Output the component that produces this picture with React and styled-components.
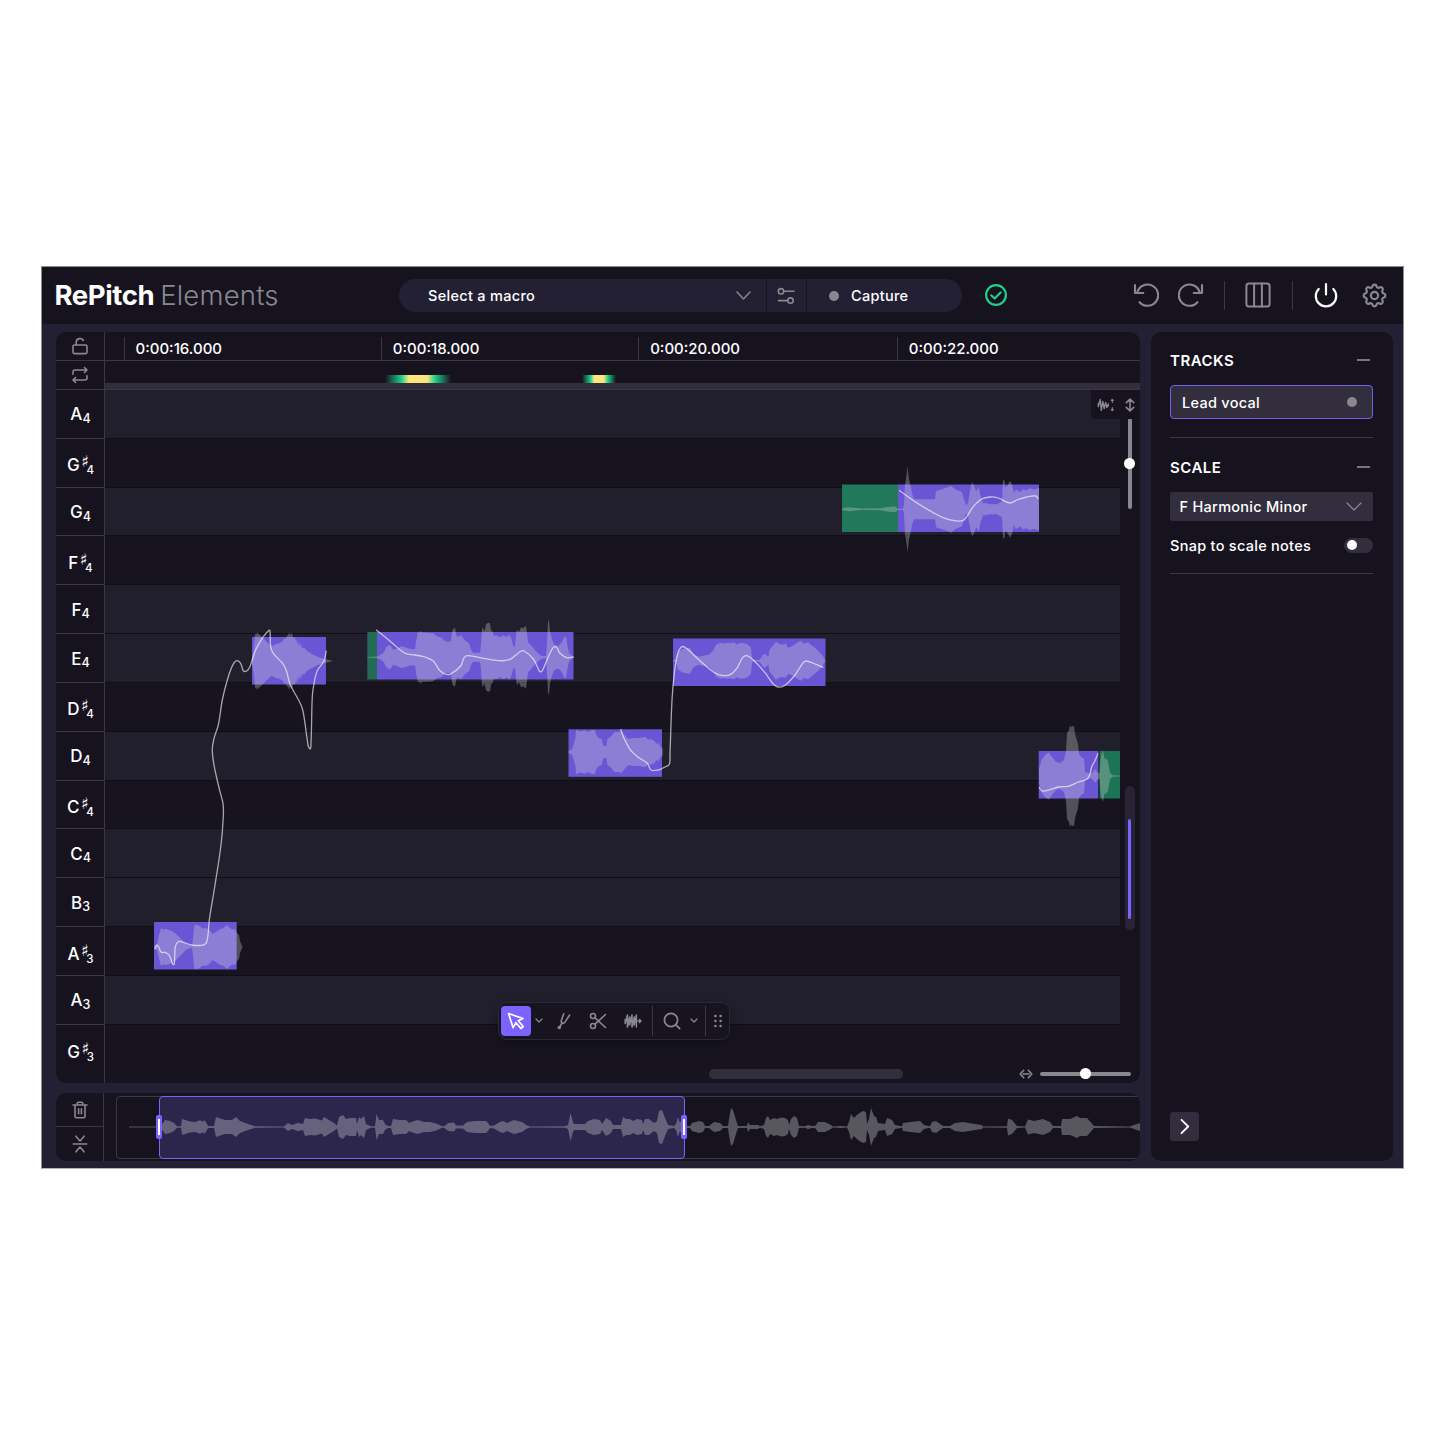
import React from 'react';
import styled, { createGlobalStyle } from 'styled-components';
import { TbSettings } from 'react-icons/tb';

const GlobalStyle = createGlobalStyle`
    * { box-sizing: border-box; }
    body {
        margin: 0;
        background: #fff;
        font-family: Inter, "Liberation Sans", sans-serif;
        -webkit-font-smoothing: antialiased;
    }
    svg { display: block; flex: none; }
`

const colors = {
    panel: '#16131f',
    frame: '#242033',
    raised: '#322e3e',
    line: '#3b3844',
    muted: '#8a888f',
    accent: '#7b63ff',
    green: '#1fd08b',
    note: '#6a56d4',
}

/* ---------- window ---------- */

const Page = styled.div`
    padding: 266px 0 0 41px;
    height: 1445px;
    overflow: hidden;
`

const Window = styled.div`
    width: 1363px;
    height: 903px;
    border: 1px solid #8f8d94;
    border-bottom-color: #b5b3b9;
    background: ${colors.frame};
    color: #fff;
    display: flex;
    flex-direction: column;
`

const TopBar = styled.header`
    height: 57px;
    padding-bottom: 1px;
    flex: none;
    background: ${colors.panel};
    display: flex;
    align-items: center;
`

const Logo = styled.div`
    width: 356.5px;
    padding-left: 12.5px;
    font-size: 27.5px;
    font-weight: 700;
    letter-spacing: -0.4px;
    white-space: nowrap;

    span {
        margin-left: 6px;
        font-weight: 300;
        letter-spacing: 0.2px;
        color: ${colors.muted};
    }
`

const MacroBar = styled.div`
    display: flex;
    gap: 1px;
    height: 33px;
    width: 563px;
    margin-top: 1px;
    border-radius: 17px;
    overflow: hidden;
    font-size: 14.5px;
    font-weight: 500;
    letter-spacing: 0.3px;
`

const MacroPart = styled.div`
    width: ${({ width }) => width}px;
    padding: ${({ pad }) => pad || '0'};
    display: flex;
    align-items: center;
    justify-content: ${({ justify }) => justify || 'flex-start'};
    gap: ${({ gap }) => gap || 0}px;
    background: ${colors.frame};
`

const Dot = styled.span`
    width: 10px;
    height: 10px;
    border-radius: 50%;
    background: ${colors.muted};
`

const Status = styled.div`
    margin-left: 22px;
`

const Actions = styled.div`
    margin-left: auto;
    padding-right: 14px;
    display: flex;
    align-items: center;
`

const Separator = styled.i`
    flex: none;
    width: 1px;
    height: ${({ height }) => height}px;
    margin: ${({ margin }) => margin || '0'};
    background: ${colors.line};
`

const Spacer = styled.i`
    flex: none;
    width: ${({ width }) => width}px;
`

const Workspace = styled.main`
    flex: 1;
    display: flex;
    gap: 11px;
    padding: 8px 10px 7px 14px;
`

const Column = styled.div`
    width: 1083.5px;
    display: flex;
    flex-direction: column;
    gap: 10px;
`

/* ---------- editor ---------- */

const Editor = styled.section`
    height: 751px;
    background: ${colors.panel};
    border-radius: 10px;
    overflow: hidden;
    display: flex;
`

const Keys = styled.div`
    width: 49px;
    flex: none;
    border-right: 1px solid ${colors.line};
`

const KeyTool = styled.div`
    height: ${({ height }) => height}px;
    border-bottom: 1px solid ${colors.line};
    display: flex;
    align-items: center;
    justify-content: center;
`

const Key = styled.div`
    height: 48.83px;
    border-bottom: 1px solid ${colors.line};
    display: flex;
    justify-content: center;
    align-items: center;
    font-size: 17px;
    font-weight: 500;
    padding: ${({ $sharp }) => ($sharp ? '5px 0 0 1px' : '1px 0 0 1px')};

    &:last-child { border-bottom: 0; }
`

const Sharp = styled.sup`
    margin: -7px 0 0 1.5px;
    font: bold 16px/15px "DejaVu Sans", sans-serif;
    vertical-align: baseline;
`

const Octave = styled.sub`
    margin: ${({ $sharp }) => ($sharp ? '10px 0 0 -2.5px' : '9px 0 0 0')};
    font-size: ${({ $sharp }) => ($sharp ? 11.5 : 12.5)}px;
    line-height: 12px;
    vertical-align: baseline;
`

const Stage = styled.div`
    flex: 1;
    min-width: 0;
    display: flex;
    flex-direction: column;
`

const Ruler = styled.div`
    height: 29px;
    flex: none;
    padding: 5px 0 0 18.5px;
    border-bottom: 1px solid ${colors.line};
    display: flex;
    overflow: hidden;
`

const Tick = styled.div`
    width: ${({ width }) => width}px;
    flex: none;
    border-left: 1px solid ${colors.line};
    padding-left: 11px;
    font-size: 15px;
    line-height: 23px;
    font-weight: 500;
`

const HeatRow = styled.div`
    height: 29px;
    flex: none;
    padding-top: 14px;
    border-bottom: 1px solid ${colors.line};
    display: flex;
    background: linear-gradient(${colors.panel} 22px, ${colors.raised} 22px);
`

const Heat = styled.i`
    height: 8px;
    width: ${({ width }) => width}px;
    margin-left: ${({ offset }) => offset}px;
    background: linear-gradient(90deg, #1fd08b00, #1fd08b 25%, #fbe67b 36%, #fbe67b 64%, #1fd08b 76%, #1fd08b00);
`

const Roll = styled.div`
    position: relative;
    flex: 1;
    display: flex;
    min-height: 0;
`

const Lanes = styled.div`
    width: 1015px;
    overflow: hidden;
`

const Lane = styled.div`
    height: 48.83px;
    background: ${({ $dark }) => ($dark ? '#171420' : '#221f2d')};
    border-bottom: 1.5px solid #0f0d15;

    &:last-child { height: 60px; border: 0; }
`

const NoteLayer = styled.svg`
    position: absolute;
    left: 0;
    top: 0;
`

const VerticalTools = styled.div`
    position: absolute;
    right: 0;
    top: 0;
    width: 48.5px;
    height: 29px;
    padding: 0 5px 0 5.5px;
    border-radius: 0 0 0 4px;
    background: ${colors.panel};
    display: flex;
    align-items: center;
    justify-content: space-between;
`

const VerticalRail = styled.div`
    width: 19px;
    padding-top: 28px;
    display: flex;
    flex-direction: column;
    align-items: center;
`

const Slider = styled.div`
    width: ${({ $vertical }) => ($vertical ? 4 : 91)}px;
    height: ${({ $vertical }) => ($vertical ? 91 : 4)}px;
    border-radius: 2px;
    background: ${colors.muted};
    display: flex;
    align-items: center;
    justify-content: center;

    &::after {
        content: '';
        flex: none;
        width: 10.5px;
        height: 10.5px;
        border-radius: 50%;
        background: #fff;
    }
`

const VerticalScroll = styled.div`
    width: 10px;
    height: 144px;
    margin-top: 277px;
    padding: 33px 3.5px 11px;
    border-radius: 5px;
    background: #282435;

    i {
        display: block;
        height: 100%;
        border-radius: 2px;
        background: ${colors.accent};
    }
`

const RollFooter = styled.div`
    position: absolute;
    left: 604px;
    right: 8.5px;
    bottom: 4px;
    height: 11px;
    display: flex;
    align-items: center;
`

const ScrollThumb = styled.div`
    width: 194px;
    height: 10px;
    margin-right: 116px;
    border-radius: 5px;
    background: ${colors.raised};
`

const Toolbar = styled.div`
    position: absolute;
    left: 392.5px;
    top: 611.5px;
    width: 232.5px;
    height: 38px;
    padding-left: 2.5px;
    border: 1px solid #2c2937;
    border-radius: 9px;
    background: #17141f;
    box-shadow: 0 4px 12px rgba(0, 0, 0, 0.3);
    display: flex;
    align-items: center;
`

const Tool = styled.div`
    flex: none;
    width: ${({ width }) => width}px;
    height: 30px;
    border-radius: 4px;
    background: ${({ $active }) => ($active ? colors.accent : 'none')};
    display: flex;
    align-items: center;
    justify-content: center;
`

/* ---------- overview ---------- */

const Overview = styled.section`
    height: 68px;
    border-radius: 10px;
    overflow: hidden;
    background: ${colors.panel};
    display: flex;
`

const OverviewTools = styled.div`
    width: 48px;
    flex: none;
    border-right: 1px solid ${colors.line};
`

const OverviewTrack = styled.div`
    position: relative;
    flex: none;
    width: 1040px;
    height: 63px;
    margin: 3px 0 0 12px;
    border: 1px solid ${colors.line};
    border-radius: 4px;
`

const OverviewWave = styled.svg`
    position: absolute;
    left: -1px;
    top: -1px;
`

const Selection = styled.div`
    position: absolute;
    left: 42px;
    top: -1px;
    width: 526px;
    height: 63px;
    border: 1.5px solid ${colors.accent};
    border-radius: 4px;
    background: #2c254c;
    display: flex;
    align-items: center;
    justify-content: space-between;
`

const Handle = styled.i`
    width: 6px;
    height: 24px;
    margin: -1px -3px 0 -4px;
    padding: 4px 2px;
    border-radius: 2px;
    background: ${colors.accent};
    z-index: 1;

    &::after {
        content: '';
        display: block;
        width: 1.5px;
        height: 16px;
        background: #fff;
    }
`

/* ---------- side panel ---------- */

const Side = styled.aside`
    width: 242.5px;
    padding: 16px 20px 20px 19.5px;
    border-radius: 10px;
    background: ${colors.panel};
    display: flex;
    flex-direction: column;
    font-size: 14.5px;
    font-weight: 500;
    letter-spacing: 0.28px;
`

const Group = styled.div`
    border-bottom: 1px solid ${colors.line};
    padding-bottom: ${({ bottom }) => bottom}px;
    margin-bottom: 17px;
`

const SideRow = styled.div`
    display: flex;
    align-items: center;
    justify-content: space-between;
    height: ${({ height }) => height}px;
    white-space: nowrap;
`

const SideTitle = styled(SideRow)`
    height: 24px;
    font-size: 15px;
    font-weight: 600;
    letter-spacing: 0.5px;

    &::after {
        content: '';
        width: 13px;
        height: 1.5px;
        margin-right: 3px;
        background: #77757d;
    }
`

const TrackItem = styled(SideRow)`
    height: 34px;
    margin-top: 13px;
    padding: 0 15.5px 0 11px;
    border: 1.5px solid #7460ee;
    border-radius: 4px;
    background: ${colors.raised};
`

const Select = styled(SideRow)`
    height: 29px;
    margin: 13px 0 10px;
    padding: 0 11px 0 9.5px;
    border-radius: 2px;
    background: ${colors.raised};
`

const Toggle = styled.i`
    width: 29px;
    height: 15px;
    padding: 2.5px;
    border-radius: 8px;
    background: ${colors.raised};

    &::after {
        content: '';
        display: block;
        width: 10px;
        height: 10px;
        border-radius: 50%;
        background: #fff;
    }
`

const ExpandButton = styled.div`
    width: 29px;
    height: 29px;
    margin-top: auto;
    border-radius: 3px;
    background: ${colors.raised};
    display: flex;
    align-items: center;
    justify-content: center;
`

/* ---------- icons ---------- */

const Icon = ({ w, h = w, color = colors.muted, sw = 1.6, children }) => (
    <svg width={w} height={h} viewBox={`0 0 ${w} ${h}`} fill="none" stroke={color}
        strokeWidth={sw} strokeLinecap="round" strokeLinejoin="round">
        {children}
    </svg>
)

const Chevron = ({ w = 14, h = 8, sw = 1.5 }) => (
    <Icon w={w} h={h} sw={sw}><path d={`M1 1 L${w / 2} ${h - 1} L${w - 1} 1`} /></Icon>
)

const UndoIcon = () => (
    <Icon w={26} sw={2.1}>
        <path d="M2 3v8h8.300" />
        <path d="M4.300 10.500A10.600 10.600 0 1 1 6.600 20.200" />
    </Icon>
)

const RedoIcon = () => (
    <Icon w={26} sw={2.1}>
        <path d="M24 3v8h-8.300" />
        <path d="M21.700 10.500A10.600 10.600 0 1 0 19.400 20.200" />
    </Icon>
)

const ColumnsIcon = () => (
    <Icon w={26} sw={2}>
        <rect x="1.400" y="1.400" width="23.200" height="23.200" rx="2.500" />
        <path d="M9.100 1.500v23M16.900 1.500v23" />
    </Icon>
)

const PowerIcon = () => (
    <Icon w={24} h={26} color="#fff" sw={2.2}>
        <path d="M12 2v10.500M4.700 7A10.200 10.200 0 1 0 19.300 7" />
    </Icon>
)

const CheckIcon = () => (
    <Icon w={24} color={colors.green} sw={2.2}>
        <circle cx="12" cy="12" r="9.900" />
        <path d="M7.200 12.300l3.400 3.200 6-6" />
    </Icon>
)

const MacroIcon = () => (
    <Icon w={18}>
        <circle cx="4" cy="4.300" r="2.700" />
        <path d="M6.700 4.300H17" />
        <circle cx="13.500" cy="13.600" r="2.700" />
        <path d="M1.500 13.600h9.300" />
    </Icon>
)

const LockIcon = () => (
    <Icon w={18} sw={1.6}>
        <rect x="2" y="8" width="14" height="8.600" rx="1.500" />
        <path d="M5.200 8V5A3.800 3.800 0 0 1 12.300 3.500" />
    </Icon>
)

const LoopIcon = () => (
    <Icon w={18} sw={1.6}>
        <path d="M2 8.300V6a2 2 0 0 1 2-2h12M13.400 1.500L16 4l-2.600 2.500" />
        <path d="M16 9.700v2.300a2 2 0 0 1-2 2H2M4.600 11.500L2 14l2.600 2.500" />
    </Icon>
)

const TrashIcon = () => (
    <Icon w={16} h={18} sw={1.6}>
        <path d="M1 4h14M3 4v11.200a1.500 1.500 0 0 0 1.500 1.500h7a1.500 1.500 0 0 0 1.500-1.500V4M5.200 4V2.500a1.200 1.200 0 0 1 1.200-1.200h3.200a1.200 1.200 0 0 1 1.200 1.200V4M6.600 7.800v5M9.400 7.800v5" />
    </Icon>
)

const CollapseIcon = () => (
    <Icon w={16} h={18} sw={1.6}>
        <path d="M1.300 9h13.400M3.900 1.200L8 6l4.100-4.800M3.900 16.800L8 12l4.100 4.800" />
    </Icon>
)

const CursorIcon = () => (
    <Icon w={18} color="#fff" sw={1.7}>
        <path d="M1.500 1.500l4.600 14.200 2.800-5 5 5.800 2.300-2-5-5.700 4.800-2.300z" />
    </Icon>
)

const ForkIcon = () => (
    <Icon w={14} h={18}>
        <path d="M6.700 1.800L4.300 8.500c-.7 2.400 2.400 3.700 3.700 1.600L12.600 3M4.800 11.500L3 14.500" />
        <circle cx="2.300" cy="15.500" r="1" fill={colors.muted} />
    </Icon>
)

const ScissorsIcon = () => (
    <Icon w={18} sw={1.6}>
        <circle cx="4" cy="4" r="2.500" />
        <circle cx="4" cy="14" r="2.500" />
        <path d="M6 5.800L16.500 15.500M6 12.200L16.500 2.500" />
    </Icon>
)

const WaveIcon = ({ vertical }) => (
    <Icon w={18} h={16} sw={vertical ? 1.4 : 1.5}>
        {vertical ? (
            <>
                <path d="M1.300 6.500v3L3.300 2.500 4.300 13.500 5.800 4.500 7.200 11.500 8.700 5.500 9.900 10.500 11.300 7v2" />
                <path d="M15.300 2.500v3M14.200 3.400l1.100-1.100 1.100 1.100M15.300 10.500v3M14.200 12.600l1.100 1.100 1.100-1.100" strokeWidth="1.100" />
            </>
        ) : (
            <>
                <path d="M1.200 6.500v4L3.400 2v12L5.600 4v8L8 2v12L10.200 4v8L12.400 2v12" />
                <path d="M14 8h2.800M15.500 6.500L17 8l-1.500 1.500" />
            </>
        )}
    </Icon>
)

const SearchIcon = () => (
    <Icon w={18} sw={1.7}>
        <circle cx="8" cy="8" r="6.600" />
        <path d="M12.900 12.900l3.800 3.800" />
    </Icon>
)

const GripIcon = () => (
    <svg width="8" height="14" viewBox="0 0 8 14" fill={colors.muted}>
        {[2, 7, 12].map((y) => (
            <React.Fragment key={y}>
                <circle cx="1.400" cy={y} r="1.300" />
                <circle cx="6.600" cy={y} r="1.300" />
            </React.Fragment>
        ))}
    </svg>
)

const StretchVertical = () => (
    <Icon w={10} h={14}>
        <path d="M5 1.500v11M1.300 4.700L5 1.200l3.700 3.500M1.300 9.300L5 12.800l3.700-3.500" />
    </Icon>
)

const StretchHorizontal = () => (
    <Icon w={14} h={10}>
        <path d="M4 5h6M4.700 1.300L1.200 5l3.500 3.700M9.300 1.300L12.800 5 9.300 8.700" />
    </Icon>
)

/* ---------- data ---------- */

const keys = ['A4', 'G#4', 'G4', 'F#4', 'F4', 'E4', 'D#4', 'D4', 'C#4', 'C4', 'B3', 'A#3', 'A3', 'G#3']

const ticks = [
    { time: '0:00:16.000', width: 257.3 },
    { time: '0:00:18.000', width: 257.4 },
    { time: '0:00:20.000', width: 258.6 },
    { time: '0:00:22.000', width: 240 },
]

// blocks: [x, width, colour], wave: [x offset, amplitude]
const notes = [
    {
        x: 154, y: 922, cy: 947, blocks: [[154, 82.7, colors.note]],
        wave: [[0, .5], [3, 3], [5, 12], [6, 15], [7, 19], [9, 17.5], [12, 18], [15, 17], [18, 16], [21, 14], [24, 11], [30, 5], [32, 3], [35, 1.5], [38, 1], [39, 8], [40, 20], [41, 22.5], [46, 21], [48, 18.5], [52, 19], [55, 17], [57, 15.5], [58, 13], [62, 15], [66, 18], [69, 18.5], [73, 22], [75, 20], [78, 17.5], [81, 18], [83, 14], [85, 12], [86, 6], [88.5, 0]],
    },
    {
        x: 252, y: 637, cy: 661, blocks: [[252, 74, colors.note]],
        wave: [[0, 3], [1.5, 10], [2.5, 20], [3, 28], [4, 26], [5, 28.500], [9, 25], [12, 22], [14, 20], [18, 16], [20, 15], [24, 17], [28, 18], [31, 20], [32, 23], [34, 22], [35, 26], [36, 25], [37, 29], [38, 26], [40, 28], [41, 23], [43, 24], [44, 19], [45, 22], [46, 15], [47, 20], [48, 14], [49, 18], [50, 13], [52, 13.5], [55, 10], [60, 7], [66, 4], [72, 2], [76, 1.2], [81, 0]],
    },
    {
        x: 377, y: 632, cy: 657.3, blocks: [[367.3, 9.7, '#226c56'], [377, 196.5, colors.note]],
        wave: [[-9.7, .4], [0, .7], [3, 2], [7, 5], [9, 10], [11, 11], [12, 12.5], [14, 11], [16, 7.5], [21, 9], [24, 11], [28, 10], [32, 8.5], [38, 8], [39, 15], [41, 26], [42, 24], [44, 26.5], [45, 24.5], [50, 24.5], [56, 24], [60, 21], [64, 20], [67, 17], [70, 15.5], [74, 16], [75, 25], [76, 28], [78, 29.5], [79, 24], [80, 20], [84, 22], [88, 17], [92, 14], [94, 8], [96, 4.5], [103, 4.5], [104, 12], [105, 28], [106, 30], [107, 26], [108, 28], [109, 33], [111, 34.5], [113, 34], [114, 27], [116, 25], [117, 21], [119, 22], [123, 20], [126, 22], [130, 20], [132, 22.5], [134, 20], [136, 12], [138, 10], [139, 22], [140, 28], [142, 25], [144, 30], [146, 29], [149, 31.5], [150, 24], [151, 15], [154, 12], [158, 7], [164, 1.5], [169, 1], [170, 15], [171, 35], [172, 38], [173, 26], [175, 18], [177, 13], [181, 11], [185, 15], [187, 20], [189, 21], [190, 14], [192, 4], [196, .5]],
    },
    {
        x: 568.5, y: 729.3, cy: 752, blocks: [[568.5, 93.5, colors.note]],
        wave: [[0, 1], [3, 2], [5, 7], [7, 14], [7.5, 22], [12, 20.5], [16, 21.5], [20, 20], [23, 22], [26, 22], [28, 17], [30, 14], [33, 13], [35, 6], [38, 6], [39, 13], [43, 16], [46, 20], [50, 20], [53, 21], [56, 17], [58, 15], [60, 13], [64, 14], [70, 14], [77, 15], [80, 12], [82, 13], [86, 11], [88, 8], [90, 9], [92, 5], [94, 4], [94.5, 0]],
    },
    {
        x: 673, y: 638.5, cy: 660.7, blocks: [[673, 152.5, colors.note]],
        wave: [[0, .6], [3, 1], [5, 9], [10, 12], [17, 13], [19, 9], [21, 6], [26, 4], [30, 5], [36, 6], [40, 10], [43, 16], [48, 18], [50, 17], [54, 18], [58, 17.5], [60, 18.500], [64, 16.5], [68, 18], [73, 17], [75, 16], [78, 13], [79, 1], [86, .7], [88, 3], [90, 6], [92, 7], [94, 5], [95.500, 4], [96.500, 11], [100, 15], [103, 19], [108, 16], [113, 17], [115, 13], [120, 15], [124, 18], [128, 20], [131, 17], [135, 18.5], [139, 15], [142, 13], [145, 10], [149, 6], [152, 1]],
    },
    {
        x: 842, y: 484.5, cy: 509.3, blocks: [[842, 56, '#22785b'], [898, 141, colors.note]],
        wave: [[0, .7], [6, 2], [12, 1.5], [20, .8], [38, 1], [44, 2], [50, 2.7], [54, 2.7], [55.5, .6], [61, .6], [62, 5], [63, 25], [64, 30], [65.5, 43], [67, 30], [69, 22], [70.500, 14], [72, 10], [93, 10], [94, 18], [100, 20], [106, 22], [109, 23.5], [113, 20], [118, 18], [120, 17], [122, 10], [124, 4], [126, 6], [127, 13], [129, 23], [130, 27], [132, 24], [134, 18], [137, 22], [138, 15], [141, 6], [145, 6], [147, 5], [155, 5], [158, 7], [160, 8], [161, 29], [162.500, 29], [163, 22], [165, 23], [168, 28.500], [170, 25], [172, 16], [174, 20], [178, 17], [181, 20], [184, 19], [188, 21], [192, 19.5], [197, 21.500]],
    },
    {
        x: 1039, y: 751, cy: 776, blocks: [[1038.7, 59.6, colors.note], [1099.5, 22, '#1d7355']],
        wave: [[0, 7], [3, 17], [7, 22], [10, 23.5], [13, 19], [17, 14], [21, 13], [25, 16], [27, 25], [28, 43], [30, 46], [31, 51], [32, 49], [34, 50], [35, 50], [36, 42], [39, 32], [40, 22], [43, 18], [45, 18], [46, 4], [50, 3], [52, 2], [55, 5], [56, 7], [59, 3], [60.500, 3], [61, 10], [62, 20], [64, 26], [65.500, 17], [67, 18], [69, 15], [71, 3], [74, .8], [82, .6]],
    },
]

const pitchLines = [
    [[155, 949.3], [157.3, 945.3], [161.3, 952.3], [165, 952.3], [169.3, 955.3], [172.8, 964.3], [174.3, 964], [175.3, 946.7], [178.3, 941.7], [183.3, 942.3], [191.7, 945], [201.7, 945.3], [206, 943.3], [208, 935], [209.3, 920], [215, 885], [221, 845], [223.3, 816.7], [223, 803.3], [220, 791.7], [214.3, 766.7], [212.3, 750], [214, 738.3], [218.3, 725], [222.3, 700], [227.3, 680], [231.7, 667.3], [235.7, 661], [239.3, 661.7], [241.7, 666], [243.3, 670.7], [246.7, 671], [249.7, 667.3], [252.7, 658.3], [256, 649.3], [262.7, 637.7], [269, 630.2], [270, 631], [270.7, 646.7], [273.3, 653.3], [283.3, 664.3], [286.7, 671.7], [290, 684], [301.7, 706.7], [305, 723.3], [307.3, 740], [309.7, 748.7], [311, 743.3], [312.3, 696.7], [314.3, 681.7], [317.3, 670.7], [324, 661], [326.3, 650.7]],
    [[376, 629.7], [390.500, 641.500], [405, 653.3], [415, 655], [425, 657], [433.3, 661], [439.3, 670], [445, 674], [450, 674.3], [460.7, 666], [464.3, 657.3], [468.3, 655.7], [483.3, 658.3], [500, 660.7], [510, 659.3], [520, 651.7], [524, 651], [533.3, 659], [537.3, 666.7], [540, 671.7], [542.3, 670.7], [550, 653.3], [555.3, 646.7], [560, 653.3], [566.7, 657.7], [573.7, 657]],
    [[620.7, 729], [623.3, 736.7], [630, 749.3], [638.3, 757.3], [647.7, 763.7], [651, 770], [658.3, 770], [664.3, 767.3], [669.300, 764.3], [670, 753.3], [672, 700], [674.3, 673.3], [677.3, 655], [681, 647.3], [685, 647.3], [700, 660.7], [713.3, 672], [721.7, 675.3], [730, 674.7], [736.7, 668.3], [742.7, 657.7], [746.7, 655.7], [753.3, 660], [765, 672.7], [773.3, 684], [778.3, 687], [785, 685.3], [795, 675], [802.7, 663.3], [806, 661], [816.7, 664.7], [823.3, 667.7]],
    [[899, 490.3], [916.7, 502.7], [933.3, 512.7], [945, 518.3], [955, 520.7], [962.7, 520.7], [966.7, 516.7], [973.3, 506.7], [981.7, 499], [990, 497], [998.3, 498], [1010, 503], [1016.7, 500], [1026.7, 497], [1036, 496], [1038, 499]],
    [[1039, 787.3], [1042.3, 791], [1050, 789.7], [1058.3, 787], [1068.3, 786.3], [1078.3, 782], [1086.7, 779.3], [1090, 774.3], [1091.7, 766.7], [1095, 760.7], [1098, 753.3]],
]

const overview = [
    [129, .5], [160, .5], [163, 4], [165, 7], [170, 6], [174, 4], [177, .7], [181, .7], [182, 8], [190, 5.5], [195, 5], [198, 6], [200, 7], [202, 5.500], [205, 6.500], [207, 3], [208, 1], [214, 1], [216, 10], [225, 7], [232, 7], [236, 10], [240, 6], [248, 3], [255, .7], [284, .5], [288, 4], [292, 2], [298, 4], [303, 3], [305, 9], [310, 8], [315, 8.500], [322, 6.500], [324, 10], [329, 7], [334, 4], [337, 1.5], [339, 10], [343, 12], [346, 8], [350, 9], [356, 9], [357, 3], [359, 10], [361, 8], [364, 11], [366, 3], [371, .7], [375, .7], [376.5, 13], [379, 7], [383, 7], [385, 3], [388, 1], [391, 1], [393, 8], [400, 7], [406, 7], [409, 4], [414, 6], [418, 7], [424, 5], [430, 5], [436, 3.5], [443, .6],
    [446, 2], [448, 4], [454, 4.5], [456, 1.5], [463, 1.5], [467, 5], [475, 6], [486, 6], [488, 4], [490, 1], [494, 1.5], [500, 5], [503, 6], [507, 4], [514, 7], [522, 5], [527, 1.5], [530, .5], [565, .7], [568, 2], [570.5, 14], [573, 5], [574, 3], [585, 3], [588, 6], [594, 8], [600, 7], [602, 3], [604, 6], [606, 9], [611, 6], [613, 2], [621, 2], [623, 10], [626, 8], [630, 8], [633, 6], [637, 8], [642, 7], [643, 3], [645, 8], [649, 8], [654, 4], [657, 6], [659, 16], [662, 17], [665, 9], [668, 2], [674, 1], [676, 3], [678, 10], [680, 4], [682, 8], [685, 1],
    [690, 1], [692, 4], [699, 6], [703, 5], [705, 1], [709, 1], [714, 5], [720, 4], [723, 1], [728, 1], [729, 8], [731, 19], [733, 17], [736, 7], [738, 1], [747, 1], [748, 5], [750, 2], [758, 2], [760, .7], [764, 2], [766, 9], [768, 11], [770, 7], [774, 9], [777, 8], [781, 9.500], [785, 9], [788, 7], [789, 2], [791, 8], [794, 11], [797, 9], [799, 1], [805, .7], [808, 2], [812, 1], [815, 1], [818, 5], [825, 5], [831, 2], [833, .6], [841, 1], [847, .6], [849, 5], [851, 13], [854, 9], [858, 13], [863, 16], [866, 15], [867, 3], [869, 8], [871, 19], [874, 11], [876, 10], [878, 4], [885, 3], [887, 9], [892, 7], [895, 2], [902, .7], [903, 4], [910, 5], [920, 6], [924, 2], [930, .7],
    [932, 5], [936, 6], [943, 1], [950, 1], [955, 4], [963, 5], [975, 3], [982, 2], [983, .5], [1007, .7], [1008, 8.500], [1012, 7], [1017, 1], [1025, .6], [1028, 7.500], [1034, 6], [1043, 8], [1050, 5], [1053, 1], [1061, 1], [1062, 8], [1070, 8], [1077, 11], [1080, 9], [1087, 9], [1094, 1], [1130, .4], [1134, 2], [1140, 4],
]

// mirrored outline around the centre line
const wavePath = (points, x, cy) => {
    const top = points.map(([px, amp]) => `${px + x} ${cy - amp}`)
    const bottom = points.map(([px, amp]) => `${px + x} ${cy + amp}`).reverse()
    return `M${top.join('L')}L${bottom.join('L')}Z`
}

// smooth curve, tangents are scaled to each segment so it never overshoots
const curvePath = (points) => {
    const tangent = (i) => {
        const a = points[Math.max(i - 1, 0)]
        const b = points[Math.min(i + 1, points.length - 1)]
        const len = Math.hypot(b[0] - a[0], b[1] - a[1]) || 1
        return [(b[0] - a[0]) / len, (b[1] - a[1]) / len]
    }
    return points.slice(1).reduce((d, p, i) => {
        const prev = points[i]
        const k = Math.hypot(p[0] - prev[0], p[1] - prev[1]) / 3
        const t1 = tangent(i)
        const t2 = tangent(i + 1)
        return `${d}C${prev[0] + t1[0] * k} ${prev[1] + t1[1] * k} ${p[0] - t2[0] * k} ${p[1] - t2[1] * k} ${p[0]} ${p[1]}`
    }, `M${points[0].join(' ')}`)
}

/* ---------- parts ---------- */

const KeyLabel = ({ name }) => {
    const sharp = name.includes('#')
    return (
        <Key $sharp={sharp}>
            {name[0]}
            {sharp && <Sharp>♯</Sharp>}
            <Octave $sharp={sharp}>{name.slice(-1)}</Octave>
        </Key>
    )
}

const Header = () => (
    <TopBar>
        <Logo>RePitch<span>Elements</span></Logo>
        <MacroBar>
            <MacroPart width={367} pad="0 15px 0 29.5px" justify="space-between">Select a macro<Chevron w={15} h={9} /></MacroPart>
            <MacroPart width={39} justify="center"><MacroIcon /></MacroPart>
            <MacroPart width={155} pad="0 0 0 22px" gap={12.5}><Dot />Capture</MacroPart>
        </MacroBar>
        <Status><CheckIcon /></Status>
        <Actions>
            <UndoIcon />
            <Spacer width={19} />
            <RedoIcon />
            <Separator height={29} margin="0 20px 0 20px" />
            <ColumnsIcon />
            <Separator height={29} margin="0 21px 0 21px" />
            <PowerIcon />
            <Spacer width={22} />
            <TbSettings size={29} color={colors.muted} strokeWidth={1.8} />
        </Actions>
    </TopBar>
)

const PianoRoll = () => (
    <Roll>
        <Lanes>{keys.map((key) => <Lane key={key} $dark={key.includes('#')} />)}</Lanes>
        <VerticalRail>
            <Slider $vertical />
            <VerticalScroll><i /></VerticalScroll>
        </VerticalRail>
        <NoteLayer width="1015" height="693" viewBox="105 390 1015 693">
            {notes.map((note) => (
                <g key={note.x}>
                    {note.blocks.map(([x, width, fill]) => <rect key={x} x={x} y={note.y} width={width} height="47.5" fill={fill} />)}
                    <path d={wavePath(note.wave, note.x, note.cy)} fill="#d8d8d8" fillOpacity=".31" />
                </g>
            ))}
            {pitchLines.map((line) => (
                <path key={line[0][0]} d={curvePath(line)} fill="none" stroke="#fff" strokeOpacity=".62" strokeWidth="1.300" strokeLinejoin="round" />
            ))}
        </NoteLayer>
        <VerticalTools><WaveIcon vertical /><StretchVertical /></VerticalTools>
        <Toolbar>
            <Tool width={30} $active><CursorIcon /></Tool>
            <Tool width={16}><Chevron w={8} h={5} sw={1.2} /></Tool>
            <Tool width={34}><ForkIcon /></Tool>
            <Tool width={34}><ScissorsIcon /></Tool>
            <Tool width={35}><WaveIcon /></Tool>
            <Spacer width={1.5} />
            <Separator height={30} />
            <Tool width={38}><SearchIcon /></Tool>
            <Tool width={6}><Chevron w={8} h={5} sw={1.2} /></Tool>
            <Spacer width={8} />
            <Separator height={30} />
            <Tool width={24}><GripIcon /></Tool>
        </Toolbar>
        <RollFooter>
            <ScrollThumb />
            <StretchHorizontal />
            <Spacer width={7} />
            <Slider />
        </RollFooter>
    </Roll>
)

const OverviewStrip = () => (
    <Overview>
        <OverviewTools>
            <KeyTool height={34}><TrashIcon /></KeyTool>
            <KeyTool height={35}><CollapseIcon /></KeyTool>
        </OverviewTools>
        <OverviewTrack>
            <Selection><Handle /><Handle /></Selection>
            <OverviewWave width="1024" height="63" viewBox="116 1096 1024 63">
                <path d={wavePath(overview, 0, 1127)} fill="#d8d8d8" fillOpacity=".34" />
            </OverviewWave>
        </OverviewTrack>
    </Overview>
)

const SidePanel = () => (
    <Side>
        <Group bottom={18}>
            <SideTitle>TRACKS</SideTitle>
            <TrackItem>Lead vocal<Dot /></TrackItem>
        </Group>
        <Group bottom={14}>
            <SideTitle>SCALE</SideTitle>
            <Select>F Harmonic Minor<Chevron w={16} h={9} sw={1.3} /></Select>
            <SideRow height={28}>Snap to scale notes<Toggle /></SideRow>
        </Group>
        <ExpandButton>
            <Icon w={10} h={17} color="#fff" sw={1.8}><path d="M1.500 1.800L8.200 8.500 1.500 15.200" /></Icon>
        </ExpandButton>
    </Side>
)

const App = () => (
    <Page>
        <GlobalStyle />
        <Window>
            <Header />
            <Workspace>
                <Column>
                    <Editor>
                        <Keys>
                            <KeyTool height={29}><LockIcon /></KeyTool>
                            <KeyTool height={29}><LoopIcon /></KeyTool>
                            {keys.map((key) => <KeyLabel key={key} name={key} />)}
                        </Keys>
                        <Stage>
                            <Ruler>{ticks.map(({ time, width }) => <Tick key={time} width={width}>{time}</Tick>)}</Ruler>
                            <HeatRow>
                                <Heat width={66} offset={280} />
                                <Heat width={34} offset={131} />
                            </HeatRow>
                            <PianoRoll />
                        </Stage>
                    </Editor>
                    <OverviewStrip />
                </Column>
                <SidePanel />
            </Workspace>
        </Window>
    </Page>
)

export default App
